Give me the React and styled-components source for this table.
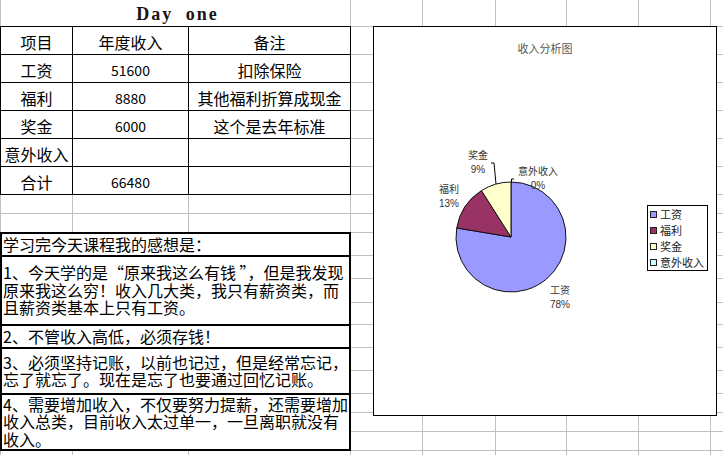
import React from "react";
import styled, {createGlobalStyle} from "styled-components";

const GlobalStyle = createGlobalStyle`
  html, body {
    margin: 0;
    padding: 0;
    background: #fff;
  }
  body {
    font-family: "Noto Sans CJK SC", sans-serif;
    color: #000;
  }
`;

// column / row sizes of the sheet (gridlines are the 1px gaps)
const COLS = [71, 115, 161, 71, 72, 70, 71, 71];
const ROWS = [26, 27, 27, 27, 27, 27, 27, 18, 18, 22, 22, 23, 21, 22, 22, 22, 18, 18, 18];
const FILLERS = (COLS.length + 1) * (ROWS.length + 1) - 3 - 18 - 30;

const tableRows = [
  ["项目", "年度收入", "备注"],
  ["工资", "51600", "扣除保险"],
  ["福利", "8880", "其他福利折算成现金"],
  ["奖金", "6000", "这个是去年标准"],
  ["意外收入", "", ""],
  ["合计", "66480", ""],
];

const income = [
  {name: "工资", value: 51600, color: "#9999ff"},
  {name: "福利", value: 8880, color: "#993366"},
  {name: "奖金", value: 6000, color: "#ffffcc"},
  {name: "意外收入", value: 0, color: "#ccffff"},
];

const Sheet = styled.div`
  position: relative;
  display: grid;
  grid-template-columns: ${COLS.map(c => c + "px").join(" ")} 1fr;
  grid-template-rows: ${ROWS.map(r => r + "px").join(" ")} 1fr;
  gap: 1px;
  padding-left: 1px;
  width: 723px;
  height: 455px;
  box-sizing: border-box;
  background: #c0c0c0;
  overflow: hidden;
`;

const Cell = styled.div`
  background: #fff;
`;

const Title = styled.div`
  grid-column: 1 / 4;
  grid-row: 1;
  background: #fff;
  display: flex;
  align-items: center;
  justify-content: center;
  padding: 3px 0 0 4px;
  box-sizing: border-box;
  font-family: "Liberation Serif", serif;
  font-weight: bold;
  font-size: 18px;
  letter-spacing: 2px;
  word-spacing: 6px;
  color: #1a1414;
  white-space: pre;
`;

const Table = styled.div`
  grid-column: 1 / 4;
  grid-row: 2 / 8;
  margin: -1px;
  padding: 1px;
  display: grid;
  grid-template-columns: 71px 115px 161px;
  grid-template-rows: repeat(6, 27px);
  gap: 1px;
  background: #000;
`;

const TableCell = styled.div`
  background: #fff;
  display: flex;
  align-items: center;
  justify-content: center;
  padding-top: 2px;
  box-sizing: border-box;
  font-size: ${props => props.$num ? "14px" : "16px"};
  line-height: 1;
  white-space: nowrap;
`;

const Notes = styled.div`
  grid-column: 1 / 4;
  grid-row: 10 / 20;
  margin: -1px;
  padding: 2px;
  display: grid;
  grid-template-rows: 21px 67px 21px 44px 54px;
  gap: 2px;
  background: #000;
`;

const NoteRow = styled.div`
  background: #fff;
  display: flex;
  flex-direction: column;
  justify-content: center;
  padding-left: 1px;
  font-size: 16px;
  line-height: 17.5px;
  white-space: nowrap;
`;

const Chart = styled.div`
  position: absolute;
  left: 373px;
  top: 26px;
  width: 344px;
  height: 390px;
  box-sizing: border-box;
  border: 1px solid #000;
  background: #fff;
  display: flex;
  flex-direction: column;
`;

const ChartTitle = styled.div`
  height: 40px;
  padding-top: 15px;
  box-sizing: border-box;
  text-align: center;
  font-size: 11px;
  line-height: 12px;
  color: #555;
`;

const PlotArea = styled.div`
  display: flex;
  align-items: flex-start;
`;

const Legend = styled.div`
  margin-top: 138px;
  width: 61px;
  border: 1px solid #000;
  box-sizing: border-box;
`;

const LegendItem = styled.div`
  display: flex;
  align-items: center;
  gap: 3px;
  height: 16px;
  padding-left: 2px;
  font-size: 11px;
  color: #222;
  white-space: nowrap;
`;

const Swatch = styled.span`
  width: 7px;
  height: 7px;
  box-sizing: border-box;
  border: 1px solid #222;
  background: ${props => props.$color};
`;

const slicePath = (cx, cy, r, a0, a1) => {
  const pt = a => [cx + r * Math.sin(a), cy - r * Math.cos(a)];
  const [x0, y0] = pt(a0);
  const [x1, y1] = pt(a1);
  const large = a1 - a0 > Math.PI ? 1 : 0;
  return `M${cx},${cy} L${x0},${y0} A${r},${r} 0 ${large} 1 ${x1},${y1} Z`;
};

const labels = [
  {name: "奖金", pct: "9%", x: 104, y: 88},
  {name: "意外收入", pct: "0%", x: 164, y: 104},
  {name: "福利", pct: "13%", x: 75, y: 122},
  {name: "工资", pct: "78%", x: 186, y: 223},
];

const Pie = () => {
  const total = income.reduce((s, d) => s + d.value, 0);
  let angle = 0;
  const slices = income.filter(d => d.value > 0).map(d => {
    const a0 = angle;
    angle += (d.value / total) * Math.PI * 2;
    return {...d, d: slicePath(137, 170, 55, a0, angle)};
  });
  return (
    <svg width="273" height="340" style={{display: "block"}}>
      {slices.map(s => (
        <path key={s.name} d={s.d} fill={s.color} stroke="#111" strokeWidth="1"/>
      ))}
      <polyline points="117,96 120,96 122,117" fill="none" stroke="#000" strokeWidth="1"/>
      <polyline points="137.5,115 137.5,112 140,112" fill="none" stroke="#000" strokeWidth="1"/>
      <g fontFamily='"Liberation Sans", "Noto Sans CJK SC", sans-serif' fontSize="10" fill="#333" textAnchor="middle">
        {labels.map(l => (
          <g key={l.name}>
            <text x={l.x} y={l.y} dominantBaseline="central">{l.name}</text>
            <text x={l.x} y={l.y + 14} dominantBaseline="central">{l.pct}</text>
          </g>
        ))}
      </g>
    </svg>
  );
};

const App = () => {
  return (
    <>
      <GlobalStyle/>
      <Sheet>
        <Title>Day one</Title>
        <Table>
          {tableRows.map((row, i) => row.map((v, j) => (
            <TableCell key={i + "-" + j} $num={j === 1 && i > 0}>{v}</TableCell>
          )))}
        </Table>
        <Notes>
          <NoteRow>学习完今天课程我的感想是：</NoteRow>
          <NoteRow>
            <span>1、今天学的是“原来我这么有钱 ”，但是我发现</span>
            <span>原来我这么穷！收入几大类，我只有薪资类，而</span>
            <span>且薪资类基本上只有工资。</span>
          </NoteRow>
          <NoteRow>2、不管收入高低，必须存钱！</NoteRow>
          <NoteRow>
            <span>3、必须坚持记账，以前也记过，但是经常忘记，</span>
            <span>忘了就忘了。现在是忘了也要通过回忆记账。</span>
          </NoteRow>
          <NoteRow>
            <span>4、需要增加收入，不仅要努力提薪，还需要增加</span>
            <span>收入总类，目前收入太过单一，一旦离职就没有</span>
            <span>收入。</span>
          </NoteRow>
        </Notes>
        {Array.from({length: FILLERS}, (_, i) => <Cell key={i}/>)}
        <Chart>
          <ChartTitle>收入分析图</ChartTitle>
          <PlotArea>
            <Pie/>
            <Legend>
              {income.map(d => (
                <LegendItem key={d.name}>
                  <Swatch $color={d.color}/>
                  {d.name}
                </LegendItem>
              ))}
            </Legend>
          </PlotArea>
        </Chart>
      </Sheet>
    </>
  );
};

export default App;
